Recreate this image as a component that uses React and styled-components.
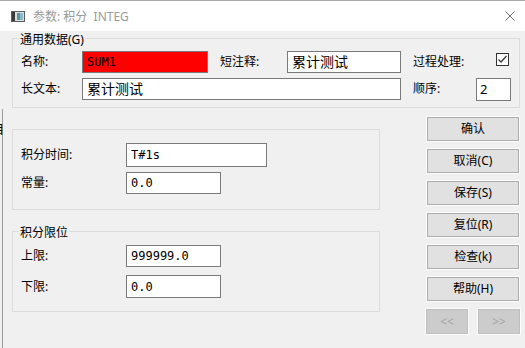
import React from 'react';
import styled, { createGlobalStyle } from 'styled-components';

const Global = createGlobalStyle`
  html, body { margin: 0; padding: 0; width: 525px; height: 348px; overflow: hidden; background: #f0f0f0; }
  body { font-family: "Noto Sans", "Noto Sans CJK SC", sans-serif; font-size: 12px; color: #000; }
  * { box-sizing: border-box; }
`;

const Window = styled.div`
  position: relative;
  width: 525px;
  height: 348px;
  display: flex;
  flex-direction: column;
  background: #f0f0f0;
  border-top: 1px solid #a9a9a9;
  overflow: hidden;
`;

const TitleBar = styled.div`
  height: 30px;
  flex: none;
  background: #fff;
  display: flex;
  align-items: center;
  padding: 0 10px 0 11px;
  gap: 8px;
`;

const TitleText = styled.span`
  color: #9a9a9a;
  font-size: 12px;
  line-height: 14px;
  white-space: pre;
  margin-top: 1px;
`;

const CloseBox = styled.div`
  margin-left: auto;
  width: 10px;
  height: 10px;
  display: flex;
`;

const Body = styled.div`
  flex: 1;
  display: flex;
  flex-direction: column;
  padding: 7px 5px 0 12px;
`;

const Group = styled.div`
  position: relative;
  border: 1px solid #dcdcdc;
  height: ${p => p.$h}px;
  margin-top: ${p => p.$mt || 0}px;
  padding: ${p => p.$pad};
`;

const GroupTitle = styled.span`
  position: absolute;
  top: -6px;
  left: 6px;
  padding: 0 1px;
  background: #f0f0f0;
  line-height: 14px;
  font-size: 12px;
`;

const TopGrid = styled.div`
  display: grid;
  grid-template-columns: 61px 126px 79px 114px 75px 35px;
  grid-template-rows: 22px 22px;
  row-gap: 5px;
  align-items: center;
`;

const Label = styled.span`
  line-height: 14px;
  padding-left: ${p => p.$pl || 0}px;
  white-space: nowrap;
`;

const TextBox = styled.div`
  grid-column: ${p => p.$span || 'auto'};
  width: ${p => (p.$w ? `${p.$w}px` : 'auto')};
  height: ${p => p.$h || 22}px;
  background: ${p => p.$bg || '#fff'};
  border: 1px solid #7a7a7a;
  display: flex;
  align-items: center;
  padding-left: ${p => p.$pl || 4}px;
  font-family: ${p => (p.$mono ? '"DejaVu Sans Mono", monospace' : '"Noto Sans", "Noto Sans CJK SC", sans-serif')};
  font-size: ${p => p.$fs || 12}px;
  line-height: 1;
  white-space: nowrap;
  overflow: hidden;
`;

const CheckBox = styled.div`
  justify-self: end;
  align-self: start;
  margin: 2px 2px 0 0;
  width: 13px;
  height: 13px;
  border: 1px solid #333;
  background: #fff;
  display: flex;
  align-items: center;
  justify-content: center;
`;

const Lower = styled.div`
  display: flex;
  flex: 1;
`;

const LeftCol = styled.div`
  width: 368px;
  display: flex;
  flex-direction: column;
  padding-top: 21px;
`;

const FieldGrid = styled.div`
  display: grid;
  grid-template-columns: 105px auto;
  row-gap: ${p => p.$gap}px;
  align-items: center;
  justify-items: start;
`;

const ButtonCol = styled.div`
  margin-left: auto;
  width: 93px;
  padding-top: 9px;
  display: flex;
  flex-direction: column;
  gap: 8px;
`;

const Button = styled.div`
  width: 92px;
  height: 24px;
  border: 1px solid #adadad;
  outline: 1px solid #fcfcfc;
  background: #e1e1e1;
  display: flex;
  align-items: center;
  justify-content: center;
  line-height: 14px;
`;

const NavRow = styled.div`
  display: flex;
  justify-content: space-between;
  width: 94px;
  margin-left: -1px;
`;

const NavButton = styled.div`
  width: 42px;
  height: 25px;
  border: 1px solid #bfbfbf;
  outline: 1px solid #fcfcfc;
  background: #cccccc;
  color: #a3a3a3;
  display: flex;
  align-items: center;
  justify-content: center;
  font-size: 12px;
`;

const EdgeLine = styled.div`
  position: absolute;
  left: 2px;
  top: 108px;
  bottom: 0;
  width: 1px;
  background: #9c9c9c;
`;

const EdgeGlyph = styled.span`
  position: absolute;
  left: -8px;
  top: 122px;
  font-size: 12px;
  line-height: 14px;
  color: #000;
`;

function AppIcon() {
  return (
    <svg width="14" height="11" viewBox="0 0 14 11">
      <rect x="0" y="0" width="14" height="11" fill="#5d5d5d" />
      <rect x="1" y="1" width="12" height="9" fill="#d9dee2" />
      <rect x="1" y="1" width="3" height="9" fill="#3a3a3a" />
      <rect x="6" y="2" width="6" height="7" fill="#4f9a9e" />
      <rect x="9" y="2" width="3" height="7" fill="#8fb6c9" />
    </svg>
  );
}

function CloseIcon() {
  return (
    <svg width="10" height="10" viewBox="0 0 10 10">
      <path d="M0.5 0.5 L9.5 9.5 M9.5 0.5 L0.5 9.5" stroke="#707070" strokeWidth="1" fill="none" />
    </svg>
  );
}

function CheckMark() {
  return (
    <svg width="11" height="11" viewBox="0 0 11 11">
      <path d="M1.5 5.5 L4 8 L9.5 2" stroke="#3a3a3a" strokeWidth="1.3" fill="none" />
    </svg>
  );
}

export default function App() {
  return (
    <>
      <Global />
      <Window>
        <TitleBar>
          <AppIcon />
          <TitleText>参数: 积分  INTEG</TitleText>
          <CloseBox><CloseIcon /></CloseBox>
        </TitleBar>
        <Body>
          <Group $h={70} $pad="12px 7px 0 8px">
            <GroupTitle>通用数据(G)</GroupTitle>
            <TopGrid>
              <Label>名称:</Label>
              <TextBox $bg="#ff0000" $mono>SUM1</TextBox>
              <Label $pl={12}>短注释:</Label>
              <TextBox $fs={14}>累计测试</TextBox>
              <Label $pl={12}>过程处理:</Label>
              <CheckBox><CheckMark /></CheckBox>
              <Label>长文本:</Label>
              <TextBox $span="2 / span 3" $fs={14}>累计测试</TextBox>
              <Label $pl={12}>顺序:</Label>
              <TextBox $h={23} $pl={3} $fs={13}>2</TextBox>
            </TopGrid>
          </Group>
          <Lower>
            <LeftCol>
              <Group $h={81} $pad="13px 0 0 8px">
                <FieldGrid $gap={5}>
                  <Label>积分时间:</Label>
                  <TextBox $w={141} $h={24} $mono>T#1s</TextBox>
                  <Label>常量:</Label>
                  <TextBox $w={95} $mono>0.0</TextBox>
                </FieldGrid>
              </Group>
              <Group $h={81} $mt={21} $pad="13px 0 0 8px">
                <GroupTitle>积分限位</GroupTitle>
                <FieldGrid $gap={8}>
                  <Label>上限:</Label>
                  <TextBox $w={95} $mono>999999.0</TextBox>
                  <Label>下限:</Label>
                  <TextBox $w={95} $h={23} $mono>0.0</TextBox>
                </FieldGrid>
              </Group>
            </LeftCol>
            <ButtonCol>
              <Button>确认</Button>
              <Button>取消(C)</Button>
              <Button>保存(S)</Button>
              <Button>复位(R)</Button>
              <Button>检查(k)</Button>
              <Button>帮助(H)</Button>
              <NavRow>
                <NavButton>&lt;&lt;</NavButton>
                <NavButton>&gt;&gt;</NavButton>
              </NavRow>
            </ButtonCol>
          </Lower>
        </Body>
        <EdgeLine />
        <EdgeGlyph>目</EdgeGlyph>
      </Window>
    </>
  );
}
